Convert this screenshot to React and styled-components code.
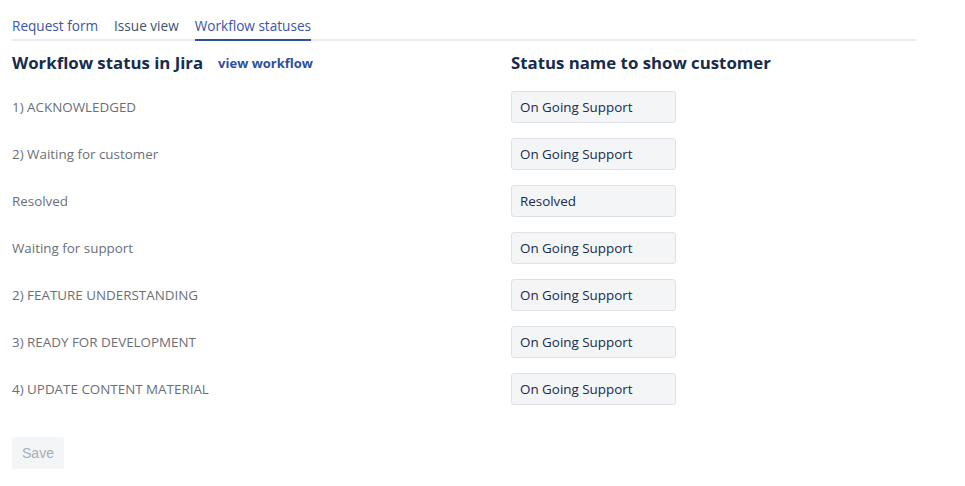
import React from "react";
import styled, { createGlobalStyle } from "styled-components";

const statuses = [
  { jira: "1) ACKNOWLEDGED", customer: "On Going Support" },
  { jira: "2) Waiting for customer", customer: "On Going Support" },
  { jira: "Resolved", customer: "Resolved" },
  { jira: "Waiting for support", customer: "On Going Support" },
  { jira: "2) FEATURE UNDERSTANDING", customer: "On Going Support" },
  { jira: "3) READY FOR DEVELOPMENT", customer: "On Going Support" },
  { jira: "4) UPDATE CONTENT MATERIAL", customer: "On Going Support" },
];

const tabs = ["Request form", "Issue view", "Workflow statuses"];

function App() {
  return (
    <>
      <GlobalStyle />
      <Page>
        <Tabs>
          {tabs.map((t, i) => (
            <Tab key={t} active={i === 2} link={i === 0}>
              {t}
            </Tab>
          ))}
        </Tabs>
        <Grid>
          <HeadingRow>
            <Heading>Workflow status in Jira</Heading>
            <HeadLink href="#">view workflow</HeadLink>
          </HeadingRow>
          <HeadingRow>
            <Heading>Status name to show customer</Heading>
          </HeadingRow>
          {statuses.map((s, i) => (
            <React.Fragment key={i}>
              <Label>{s.jira}</Label>
              <Field>
                <Input defaultValue={s.customer} />
              </Field>
            </React.Fragment>
          ))}
        </Grid>
        <SaveButton disabled>Save</SaveButton>
      </Page>
    </>
  );
}

export default App;

const GlobalStyle = createGlobalStyle`
  body {
    margin: 0;
    background: #fff;
    font-family: "Open Sans", "Noto Sans", sans-serif;
    color: #172b4d;
  }
`;

const Page = styled.div`
  width: 904px;
  padding: 15px 0 0 12px;
`;

const Tabs = styled.div`
  display: flex;
  gap: 16px;
  border-bottom: 2px solid #ebecf0;
`;

const Tab = styled.div`
  font-size: 13.6px;
  line-height: 22px;
  padding-bottom: 2px;
  margin-bottom: -2px;
  color: ${(p) => (p.active || p.link ? "#3a55a5" : "#42526e")};
  border-bottom: 2px solid ${(p) => (p.active ? "#2d4f9e" : "transparent")};
`;

const Grid = styled.div`
  display: grid;
  grid-template-columns: 499px 1fr;
  grid-template-rows: 42px;
  grid-auto-rows: 47px;
`;

const HeadingRow = styled.div`
  display: flex;
  align-items: center;
  gap: 15px;
`;

const Heading = styled.h3`
  margin: 0;
  font-size: 16.8px;
  font-weight: 700;
  color: #172b4d;
`;

const HeadLink = styled.a`
  font-size: 13px;
  font-weight: 700;
  color: #2d4f9e;
  text-decoration: none;
  margin-top: 2px;
`;

const Label = styled.div`
  display: flex;
  align-items: center;
  font-size: 13.4px;
  color: #6b6f78;
`;

const Field = styled.div`
  display: flex;
  align-items: center;
`;

const Input = styled.input`
  box-sizing: border-box;
  width: 165px;
  height: 32px;
  padding: 0 8px;
  background: #f4f5f7;
  border: 1px solid #dfe1e6;
  border-radius: 3px;
  font-family: "Open Sans", "Noto Sans", sans-serif;
  font-size: 13.4px;
  color: #172b4d;
  outline: none;
`;

const SaveButton = styled.button`
  width: 52px;
  height: 32px;
  margin-top: 25px;
  border: none;
  border-radius: 3px;
  background: #f4f5f7;
  color: #a5adba;
  font-family: "Liberation Sans", Arial, sans-serif;
  font-size: 14px;
  cursor: not-allowed;
`;
